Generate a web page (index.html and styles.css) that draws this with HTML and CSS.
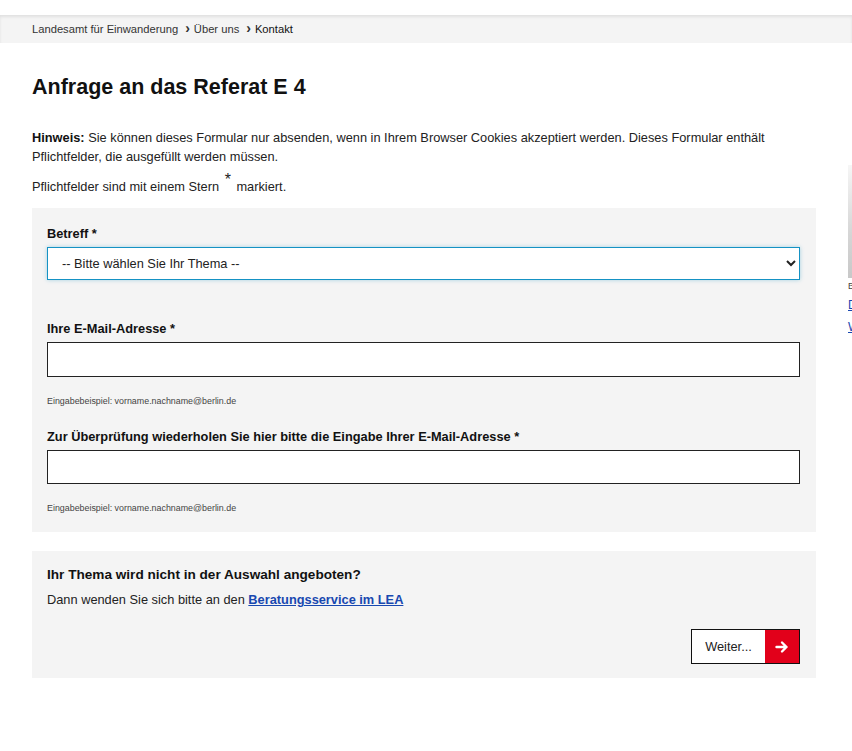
FILE: index.html
```html
<!DOCTYPE html>
<html lang="de">
<head>
<meta charset="utf-8">
<title>Anfrage an das Referat E 4</title>
<link rel="stylesheet" href="styles.css">
</head>
<body>
<div class="topbar"></div>
<nav class="breadcrumb">
  <a href="#">Landesamt für Einwanderung</a>
  <span class="sep">&#x203A;</span>
  <a href="#">Über uns</a>
  <span class="sep">&#x203A;</span>
  <span class="current">Kontakt</span>
</nav>
<div class="page">
  <main class="main">
    <h1>Anfrage an das Referat E 4</h1>
    <p class="note"><strong>Hinweis:</strong> Sie können dieses Formular nur absenden, wenn in Ihrem Browser Cookies akzeptiert werden. Dieses Formular enthält Pflichtfelder, die ausgefüllt werden müssen.</p>
    <p class="note2">Pflichtfelder sind mit einem Stern <sup class="star">*</sup> markiert.</p>
    <form class="formbox">
      <div class="field field-select">
        <label class="label" for="betreff">Betreff *</label>
        <select id="betreff" class="select"><option>-- Bitte wählen Sie Ihr Thema --</option></select>
      </div>
      <div class="field">
        <label class="label" for="mail1">Ihre E-Mail-Adresse *</label>
        <input id="mail1" class="input" type="text">
        <div class="hint">Eingabebeispiel: vorname.nachname@berlin.de</div>
      </div>
      <div class="field">
        <label class="label" for="mail2">Zur Überprüfung wiederholen Sie hier bitte die Eingabe Ihrer E-Mail-Adresse *</label>
        <input id="mail2" class="input input2" type="text">
        <div class="hint">Eingabebeispiel: vorname.nachname@berlin.de</div>
      </div>
    </form>
    <section class="infobox">
      <h2>Ihr Thema wird nicht in der Auswahl angeboten?</h2>
      <p>Dann wenden Sie sich bitte an den <a href="#">Beratungsservice im LEA</a></p>
      <div class="actions">
        <button class="btn" type="button"><span class="btn-text">Weiter...</span><span class="btn-icon"><svg width="14" height="14" viewBox="0 0 14 14"><path d="M1.5 7h10M7 2.5L11.5 7 7 11.5" fill="none" stroke="#fff" stroke-width="2.4" stroke-linecap="round" stroke-linejoin="round"/></svg></span></button>
      </div>
    </section>
  </main>
  <aside class="side">
    <div class="side-img"></div>
    <div class="side-cap">Bild</div>
    <a href="#" class="side-link">Downloads</a>
    <a href="#" class="side-link">Weitere</a>
  </aside>
</div>
</body>
</html>
```
FILE: styles.css
```css
html, body {
  margin: 0;
  padding: 0;
  background: #fff;
  overflow: hidden;
}
body {
  font-family: "Liberation Sans", Arial, sans-serif;
  color: #222;
  font-size: 12.8px;
  width: 852px;
}
.topbar {
  height: 15px;
  background: #fff;
}
.breadcrumb {
  height: 28px;
  background: #f4f4f4;
  box-shadow: inset 0 2px 3px rgba(0,0,0,0.08);
  display: flex;
  align-items: center;
  padding-left: 32px;
  font-size: 11.2px;
  color: #333;
  gap: 4px;
  box-sizing: border-box;
}
.breadcrumb a {
  color: #333;
  text-decoration: none;
}
.breadcrumb .sep {
  font-weight: bold;
  font-size: 14px;
  margin: 0 0 0 3px;
  line-height: 1;
  position: relative;
  top: -1px;
}
.breadcrumb .current {
  color: #111;
}
.page {
  display: flex;
  padding-left: 32px;
}
.main {
  width: 784px;
  flex: none;
}
h1 {
  font-size: 21.5px;
  font-weight: bold;
  color: #111;
  margin: 31px 0 0;
  line-height: 26px;
}
.note {
  margin: 28px 0 0;
  line-height: 19px;
  color: #222;
}
.note strong {
  color: #111;
}
.note2 {
  margin: 11px 0 0;
  line-height: 19px;
}
.star {
  font-size: 16px;
  line-height: 0;
  vertical-align: 0;
  position: relative;
  top: -6px;
  margin: 0 2px;
}
.formbox {
  margin-top: 12px;
  background: #f4f4f4;
  padding: 17px 16px 18px 15px;
  display: flex;
  flex-direction: column;
}
.field {
  display: flex;
  flex-direction: column;
}
.field-select {
  padding-bottom: 40px;
}
.label {
  font-weight: bold;
  color: #111;
  line-height: 18px;
  margin-bottom: 4px;
}
.select {
  height: 33px;
  box-sizing: border-box;
  border: 1px solid #1592c4;
  box-shadow: 0 0 4px rgba(21,146,196,0.35);
  background: #fff;
  font-family: "Liberation Sans", Arial, sans-serif;
  font-size: 12.8px;
  color: #222;
  padding: 0 8px 0 10px;
  border-radius: 0;
}
.input {
  height: 35px;
  box-sizing: border-box;
  border: 1px solid #222;
  background: #fff;
  border-radius: 0;
  margin: 0;
}
.input2 {
  height: 34px;
}
.hint {
  font-size: 8.9px;
  color: #444;
  margin-top: 19px;
  margin-bottom: 21px;
  line-height: 11px;
}
.field:last-child .hint {
  margin-bottom: 0;
}
.infobox {
  margin-top: 19px;
  background: #f4f4f4;
  padding: 15px 16px 14px 15px;
}
.infobox h2 {
  font-size: 13.6px;
  font-weight: bold;
  color: #111;
  margin: 0;
  line-height: 18px;
}
.infobox p {
  margin: 7px 0 0;
  line-height: 18px;
}
.infobox a {
  color: #1848b0;
  font-weight: bold;
  text-decoration: underline;
}
.actions {
  display: flex;
  justify-content: flex-end;
  margin-top: 20px;
}
.btn {
  display: flex;
  padding: 0;
  border: 1px solid #111;
  background: #fff;
  height: 35px;
  box-sizing: border-box;
  font-family: "Liberation Sans", Arial, sans-serif;
  cursor: pointer;
}
.btn-text {
  width: 73px;
  display: flex;
  align-items: center;
  justify-content: center;
  font-size: 12.8px;
  color: #222;
}
.btn-icon {
  width: 34px;
  background: #e2001a;
  display: flex;
  align-items: center;
  justify-content: center;
}
.side {
  margin-left: 32px;
  width: 200px;
  flex: none;
  padding-top: 122px;
  font-size: 12px;
}
.side-img {
  height: 113px;
  background: linear-gradient(180deg, #f6f6f6 0%, #d6d6d6 60%, #c8c8c8 100%);
}
.side-cap {
  font-size: 9px;
  color: #444;
  margin-top: 1px;
  line-height: 14px;
}
.side-link {
  display: block;
  color: #1848b0;
  text-decoration: underline;
  line-height: 20px;
  margin-top: 2px;
}
```
